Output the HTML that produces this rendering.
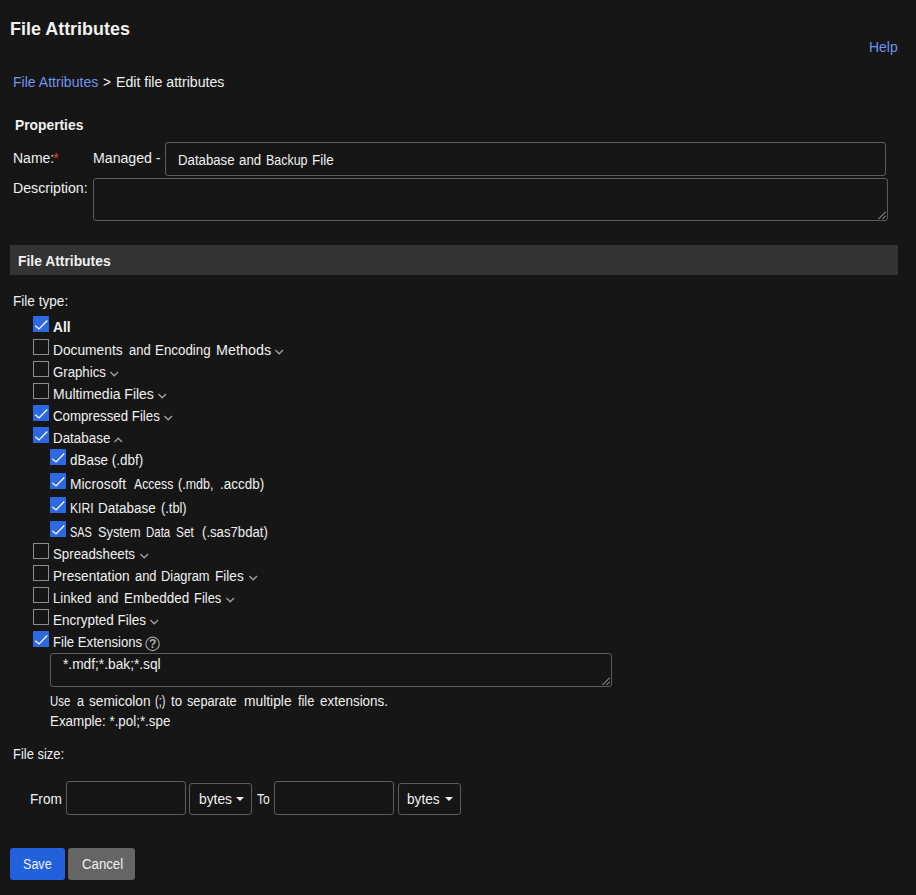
<!DOCTYPE html>
<html lang="en">
<head>
<meta charset="utf-8">
<title>File Attributes</title>
<style>
html,body{margin:0;padding:0;}
body{width:916px;height:895px;background:#161616;color:#f1f1f1;font-family:"Liberation Sans",Arial,sans-serif;font-size:14px;position:relative;overflow:hidden;}
.t{position:absolute;white-space:nowrap;line-height:16px;transform-origin:0 0;}
.w{display:inline-block;transform-origin:0 0;}
.b{font-weight:bold;}
.lnk{color:#6f94ea;}
.box{position:absolute;box-sizing:border-box;border:1px solid #5c5c5c;border-radius:3px;background:#161616;}
.bar{position:absolute;left:10px;top:245px;width:888px;height:30px;background:#333333;}
.cb{position:absolute;width:16px;height:16px;box-sizing:border-box;border:1px solid #8c8c8c;border-radius:0;background:#161616;}
.cb.on{border:none;background:#2c68e0;border-radius:0.5px;}
.cb svg{position:absolute;left:0;top:0;}
.chev,.ic{position:absolute;}
.btn{position:absolute;box-sizing:border-box;border-radius:3px;height:32px;}
.caret{position:absolute;width:0;height:0;border-left:4px solid transparent;border-right:4px solid transparent;border-top:4px solid #f1f1f1;}
</style>
</head>
<body>

<div class="box" style="left:165px;top:142px;width:721px;height:34px;"></div>
<div class="box" style="left:93px;top:178px;width:795px;height:43px;"></div>
<svg class="ic" style="left:878px;top:211px" width="8" height="8" viewBox="0 0 8 8"><path d="M0.5 8 L8 0.5 M4.5 8 L8 4.5" stroke="#b8b8b8" stroke-width="1" fill="none"/></svg>
<div class="bar"></div>
<div class="box" style="left:50px;top:653px;width:562px;height:34px;"></div>
<svg class="ic" style="left:602px;top:677px" width="8" height="8" viewBox="0 0 8 8"><path d="M0.5 8 L8 0.5 M4.5 8 L8 4.5" stroke="#b8b8b8" stroke-width="1" fill="none"/></svg>
<div class="box" style="left:66px;top:781px;width:120px;height:34px;"></div>
<div class="box" style="left:189px;top:783px;width:63px;height:32px;"></div>
<div class="caret" style="left:236px;top:797px"></div>
<div class="box" style="left:274px;top:781px;width:120px;height:34px;"></div>
<div class="box" style="left:398px;top:783px;width:63px;height:32px;"></div>
<div class="caret" style="left:444.5px;top:797px"></div>
<div class="btn" style="left:10px;top:848px;width:55px;background:#2260dc;"></div>
<div class="btn" style="left:68px;top:848px;width:67px;background:#656565;"></div>
<svg class="ic" style="left:144.5px;top:635.5px" width="16" height="16" viewBox="0 0 16 16"><circle cx="7.6" cy="7.9" r="6.7" stroke="#9c9c9c" stroke-width="1.2" fill="none"/><text x="7.7" y="12.1" font-family="Liberation Sans, Arial, sans-serif" font-size="12" font-weight="bold" fill="#adadad" text-anchor="middle">?</text></svg>
<div class="t" id="ast" style="left:53.3px;top:150px;color:#e5483f;">*</div>
<div class="cb on" style="left:33px;top:316px"><svg width="16" height="16" viewBox="0 0 16 16"><path d="M2.3 9.7 L6 13 L14.3 4.5" stroke="#ffffff" stroke-width="1.25" fill="none"/></svg></div>
<div class="cb" style="left:33px;top:339px"></div>
<svg class="chev" style="left:275.0px;top:349px" width="9" height="6" viewBox="0 0 9 6"><path d="M0.4 1 L4.2 4.8 L8 1" stroke="#a3a3a3" stroke-width="1.3" fill="none"/></svg>
<div class="cb" style="left:33px;top:361px"></div>
<svg class="chev" style="left:110.4px;top:371px" width="9" height="6" viewBox="0 0 9 6"><path d="M0.4 1 L4.2 4.8 L8 1" stroke="#a3a3a3" stroke-width="1.3" fill="none"/></svg>
<div class="cb" style="left:33px;top:383px"></div>
<svg class="chev" style="left:157.9px;top:393px" width="9" height="6" viewBox="0 0 9 6"><path d="M0.4 1 L4.2 4.8 L8 1" stroke="#a3a3a3" stroke-width="1.3" fill="none"/></svg>
<div class="cb on" style="left:33px;top:405px"><svg width="16" height="16" viewBox="0 0 16 16"><path d="M2.3 9.7 L6 13 L14.3 4.5" stroke="#ffffff" stroke-width="1.25" fill="none"/></svg></div>
<svg class="chev" style="left:164.4px;top:415px" width="9" height="6" viewBox="0 0 9 6"><path d="M0.4 1 L4.2 4.8 L8 1" stroke="#a3a3a3" stroke-width="1.3" fill="none"/></svg>
<div class="cb on" style="left:33px;top:427px"><svg width="16" height="16" viewBox="0 0 16 16"><path d="M2.3 9.7 L6 13 L14.3 4.5" stroke="#ffffff" stroke-width="1.25" fill="none"/></svg></div>
<svg class="chev" style="left:114.3px;top:437px" width="9" height="6" viewBox="0 0 9 6"><path d="M0.4 5 L4.2 1.2 L8 5" stroke="#a3a3a3" stroke-width="1.3" fill="none"/></svg>
<div class="cb on" style="left:50px;top:449px"><svg width="16" height="16" viewBox="0 0 16 16"><path d="M2.3 9.7 L6 13 L14.3 4.5" stroke="#ffffff" stroke-width="1.25" fill="none"/></svg></div>
<div class="cb on" style="left:50px;top:473px"><svg width="16" height="16" viewBox="0 0 16 16"><path d="M2.3 9.7 L6 13 L14.3 4.5" stroke="#ffffff" stroke-width="1.25" fill="none"/></svg></div>
<div class="cb on" style="left:50px;top:497px"><svg width="16" height="16" viewBox="0 0 16 16"><path d="M2.3 9.7 L6 13 L14.3 4.5" stroke="#ffffff" stroke-width="1.25" fill="none"/></svg></div>
<div class="cb on" style="left:50px;top:521px"><svg width="16" height="16" viewBox="0 0 16 16"><path d="M2.3 9.7 L6 13 L14.3 4.5" stroke="#ffffff" stroke-width="1.25" fill="none"/></svg></div>
<div class="cb" style="left:33px;top:543px"></div>
<svg class="chev" style="left:139.5px;top:553px" width="9" height="6" viewBox="0 0 9 6"><path d="M0.4 1 L4.2 4.8 L8 1" stroke="#a3a3a3" stroke-width="1.3" fill="none"/></svg>
<div class="cb" style="left:33px;top:565px"></div>
<svg class="chev" style="left:248.5px;top:575px" width="9" height="6" viewBox="0 0 9 6"><path d="M0.4 1 L4.2 4.8 L8 1" stroke="#a3a3a3" stroke-width="1.3" fill="none"/></svg>
<div class="cb" style="left:33px;top:587px"></div>
<svg class="chev" style="left:225.9px;top:597px" width="9" height="6" viewBox="0 0 9 6"><path d="M0.4 1 L4.2 4.8 L8 1" stroke="#a3a3a3" stroke-width="1.3" fill="none"/></svg>
<div class="cb" style="left:33px;top:609px"></div>
<svg class="chev" style="left:150.0px;top:619px" width="9" height="6" viewBox="0 0 9 6"><path d="M0.4 1 L4.2 4.8 L8 1" stroke="#a3a3a3" stroke-width="1.3" fill="none"/></svg>
<div class="cb on" style="left:33px;top:631px"><svg width="16" height="16" viewBox="0 0 16 16"><path d="M2.3 9.7 L6 13 L14.3 4.5" stroke="#ffffff" stroke-width="1.25" fill="none"/></svg></div>
<div class="t b" id="title" style="left:10px;top:18px;font-size:18px;line-height:22px;transform:scaleX(0.9963);">File Attributes</div>
<div class="t lnk" id="help" style="left:868.56px;top:39px;transform:scaleX(0.9969);">Help</div>
<div class="t lnk" id="cr1" style="left:13px;top:74px;transform:scaleX(1.0050);">File Attributes</div>
<div class="t" id="cr2" style="left:103.48px;top:74px;transform:scaleX(0.9650);">&gt;</div>
<div class="t" id="cr3" style="left:115.74px;top:74px;transform:scaleX(1.0096);">Edit file attributes</div>
<div class="t b" id="props" style="left:15px;top:117px;transform:scaleX(0.9867);">Properties</div>
<div class="t" id="name" style="left:13px;top:150px;">Name:</div>
<div class="t" id="managed" style="left:93px;top:150px;transform:scaleX(1.0093);">Managed -</div>
<div class="t" id="nameval" style="left:177.74px;top:152px;"><span class="w" id="nameval_w0" style="width:60.93px;transform:scaleX(0.9432);">Database </span><span class="w" id="nameval_w1" style="width:27.69px;transform:scaleX(0.9484);">and </span><span class="w" id="nameval_w2" style="width:45.96px;transform:scaleX(0.8893);">Backup </span><span class="w" id="nameval_w3" style="transform:scaleX(0.9656);">File</span></div>
<div class="t" id="desc" style="left:13px;top:180px;transform:scaleX(1.0095);">Description:</div>
<div class="t b" id="fa" style="left:18px;top:253px;transform:scaleX(0.9892);">File Attributes</div>
<div class="t" id="ftype" style="left:13px;top:293px;transform:scaleX(0.9717);">File type:</div>
<div class="t" id="extval" style="left:62.76px;top:656px;transform:scaleX(0.9806);">*.mdf;*.bak;*.sql</div>
<div class="t" id="hint1" style="left:50.00px;top:693px;"><span class="w" id="hint1_w0" style="width:26.57px;transform:scaleX(0.8152);">Use </span><span class="w" id="hint1_w1" style="width:11.95px;transform:scaleX(0.9000);">a </span><span class="w" id="hint1_w2" style="width:66.96px;transform:scaleX(0.9771);">semicolon </span><span class="w" id="hint1_w3" style="width:15.12px;transform:scaleX(0.7800);">(;) </span><span class="w" id="hint1_w4" style="width:16.71px;transform:scaleX(0.9431);">to </span><span class="w" id="hint1_w5" style="width:56.41px;transform:scaleX(0.9092);">separate </span><span class="w" id="hint1_w6" style="width:54.17px;transform:scaleX(0.9866);">multiple </span><span class="w" id="hint1_w7" style="width:22.21px;transform:scaleX(0.9089);">file </span><span class="w" id="hint1_w8" style="transform:scaleX(0.9608);">extensions.</span></div>
<div class="t" id="hint2" style="left:50px;top:713px;transform:scaleX(0.9548);">Example: *.pol;*.spe</div>
<div class="t" id="fsize" style="left:13px;top:746px;transform:scaleX(0.9256);">File size:</div>
<div class="t" id="from" style="left:30.13px;top:791px;transform:scaleX(0.9760);">From</div>
<div class="t" id="by1" style="left:198.78px;top:791px;transform:scaleX(0.9849);">bytes</div>
<div class="t" id="to" style="left:257.38px;top:791px;transform:scaleX(0.8654);">To</div>
<div class="t" id="by2" style="left:406.58px;top:791px;transform:scaleX(0.9737);">bytes</div>
<div class="t" id="save" style="left:22.68px;top:856px;transform:scaleX(0.8970);">Save</div>
<div class="t" id="cancel" style="left:81.63px;top:856px;transform:scaleX(0.9438);">Cancel</div>
<div class="t b" id="r_all" style="left:53px;top:319px;transform:scaleX(0.9775);">All</div>
<div class="t" id="r_doc" style="left:53.00px;top:342px;"><span class="w" id="r_doc_w0" style="width:75.81px;transform:scaleX(0.9828);">Documents </span><span class="w" id="r_doc_w1" style="width:26.23px;transform:scaleX(0.9257);">and </span><span class="w" id="r_doc_w2" style="width:60.86px;transform:scaleX(0.9525);">Encoding </span><span class="w" id="r_doc_w3" style="transform:scaleX(1.0256);">Methods</span></div>
<div class="t" id="r_gra" style="left:53px;top:364px;transform:scaleX(0.9431);">Graphics</div>
<div class="t" id="r_mul" style="left:53px;top:386px;transform:scaleX(0.9971);">Multimedia Files</div>
<div class="t" id="r_com" style="left:53px;top:408px;transform:scaleX(0.9464);">Compressed Files</div>
<div class="t" id="r_dat" style="left:53px;top:430px;transform:scaleX(0.9565);">Database</div>
<div class="t" id="r_dba" style="left:70px;top:452px;transform:scaleX(0.9587);">dBase (.dbf)</div>
<div class="t" id="r_acc" style="left:70.00px;top:476px;"><span class="w" id="r_acc_w0" style="width:63.75px;transform:scaleX(0.9870);">Microsoft </span><span class="w" id="r_acc_w1" style="width:44.71px;transform:scaleX(0.8711);">Access </span><span class="w" id="r_acc_w2" style="width:41.07px;transform:scaleX(0.8919);">(.mdb, </span><span class="w" id="r_acc_w3" style="transform:scaleX(0.9624);">.accdb)</span></div>
<div class="t" id="r_kir" style="left:70.00px;top:500px;"><span class="w" id="r_kir_w0" style="width:28.48px;transform:scaleX(0.8663);">KIRI </span><span class="w" id="r_kir_w1" style="width:62.32px;transform:scaleX(0.9618);">Database </span><span class="w" id="r_kir_w2" style="transform:scaleX(0.9155);">(.tbl)</span></div>
<div class="t" id="r_sas" style="left:70.00px;top:524px;"><span class="w" id="r_sas_w0" style="width:28.13px;transform:scaleX(0.7800);">SAS </span><span class="w" id="r_sas_w1" style="width:47.82px;transform:scaleX(0.9117);">System </span><span class="w" id="r_sas_w2" style="width:30.47px;transform:scaleX(0.8184);">Data </span><span class="w" id="r_sas_w3" style="width:25.30px;transform:scaleX(0.8448);">Set </span><span class="w" id="r_sas_w4" style="transform:scaleX(0.9395);">(.sas7bdat)</span></div>
<div class="t" id="r_spr" style="left:53px;top:546px;transform:scaleX(0.9491);">Spreadsheets</div>
<div class="t" id="r_pre" style="left:53.00px;top:568px;"><span class="w" id="r_pre_w0" style="width:81.78px;transform:scaleX(0.9742);">Presentation </span><span class="w" id="r_pre_w1" style="width:26.63px;transform:scaleX(0.9210);">and </span><span class="w" id="r_pre_w2" style="width:53.79px;transform:scaleX(0.9180);">Diagram </span><span class="w" id="r_pre_w3" style="transform:scaleX(0.9700);">Files</span></div>
<div class="t" id="r_lin" style="left:53.00px;top:590px;"><span class="w" id="r_lin_w0" style="width:44.14px;transform:scaleX(0.9344);">Linked </span><span class="w" id="r_lin_w1" style="width:26.73px;transform:scaleX(0.9224);">and </span><span class="w" id="r_lin_w2" style="width:70.26px;transform:scaleX(0.9619);">Embedded </span><span class="w" id="r_lin_w3" style="transform:scaleX(0.9225);">Files</span></div>
<div class="t" id="r_enc" style="left:53px;top:612px;transform:scaleX(0.9636);">Encrypted Files</div>
<div class="t" id="r_ext" style="left:53px;top:634px;transform:scaleX(0.9390);">File Extensions</div>
</body>
</html>
